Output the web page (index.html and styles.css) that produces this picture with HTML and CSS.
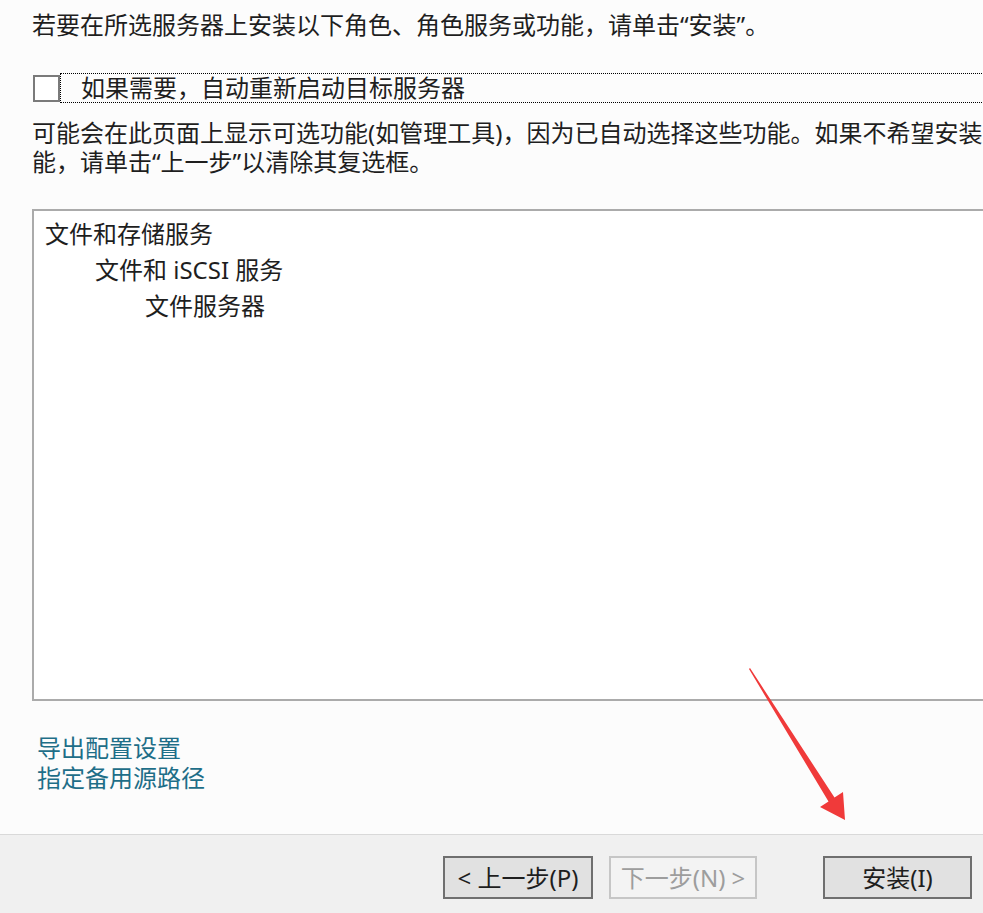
FILE: index.html
```html
<!DOCTYPE html>
<html lang="zh-CN">
<head>
<meta charset="utf-8">
<title>确认安装所选内容</title>
<link rel="stylesheet" href="styles.css">
</head>
<body>
<div class="page">
  <div class="content">
    <p class="intro">若要在所选服务器上安装以下角色、角色服务或功能，请单击“安装”。</p>
    <div class="check-row">
      <span class="checkbox"></span>
      <span class="focus-label">如果需要，自动重新启动目标服务器</span>
    </div>
    <p class="note">可能会在此页面上显示可选功能(如管理工具)，因为已自动选择这些功能。如果不希望安装这些可选功<br>能，请单击“上一步”以清除其复选框。</p>
    <div class="listbox">
      <div class="item lvl0">文件和存储服务</div>
      <div class="item lvl1">文件和 iSCSI 服务</div>
      <div class="item lvl2">文件服务器</div>
    </div>
    <div class="links">
      <a class="link">导出配置设置</a>
      <a class="link">指定备用源路径</a>
    </div>
  </div>
  <div class="footer">
    <button class="btn">&lt; 上一步(P)</button>
    <button class="btn disabled">下一步(N) &gt;</button>
    <button class="btn install">安装(I)</button>
  </div>
  <svg class="arrow" width="120" height="170" viewBox="0 0 120 170">
    <path d="M3 3 L82.5 135.5 L74 141 L99 154 L97 126 L88.5 131.5 L4 2 Z" fill="#f03a3a"/>
  </svg>
</div>
</body>
</html>
```

FILE: styles.css
```css
html, body {
  margin: 0;
  padding: 0;
}
body {
  width: 983px;
  height: 913px;
  overflow: hidden;
  background: #fcfcfc;
  font-family: "Noto Sans", "Noto Sans CJK SC", sans-serif;
  color: #1e1e1e;
}
.page {
  position: relative;
  width: 983px;
  height: 913px;
  display: flex;
  flex-direction: column;
}
.content {
  flex: 1;
  padding-left: 32px;
  padding-top: 10px;
  box-sizing: border-box;
}
.intro {
  margin: 0;
  font-size: 24px;
  line-height: 30px;
  white-space: nowrap;
}
.check-row {
  margin-top: 33px;
  display: flex;
  align-items: center;
  height: 30px;
  white-space: nowrap;
}
.checkbox {
  width: 23px;
  height: 23px;
  border: 2px solid #7a7a7a;
  background: #fff;
  flex: none;
  margin-left: 1px;
}
.focus-label {
  flex: none;
  width: 1000px;
  height: 30px;
  box-sizing: border-box;
  border: 1px dotted #000;
  padding-left: 20px;
  font-size: 24px;
  line-height: 28px;
}
.note {
  margin: 15px 0 0;
  font-size: 24px;
  line-height: 29px;
  white-space: nowrap;
}
.listbox {
  margin-top: 33px;
  width: 1000px;
  height: 492px;
  box-sizing: border-box;
  border: 2px solid #ababab;
  background: #fff;
  padding-top: 5px;
  padding-left: 11px;
}
.item {
  font-size: 24px;
  line-height: 36px;
  white-space: nowrap;
}
.lvl1 { padding-left: 50px; }
.lvl2 { padding-left: 100px; }
.links {
  margin-top: 32px;
  padding-left: 5px;
  display: flex;
  flex-direction: column;
}
.link {
  font-size: 24px;
  line-height: 30px;
  color: #1e6e88;
}
.footer {
  flex: none;
  height: 79px;
  box-sizing: border-box;
  border-top: 1px solid #d9d9d9;
  background: #f0f0f0;
  display: flex;
  align-items: flex-start;
  padding-top: 21px;
  padding-left: 443px;
}
.btn {
  height: 43px;
  box-sizing: border-box;
  border: 2px solid #6f6f6f;
  background: #e1e1e1;
  font-family: "Noto Sans", "Noto Sans CJK SC", sans-serif;
  font-size: 24px;
  line-height: 36px;
  color: #1e1e1e;
  padding: 0;
  width: 150px;
}
.btn.disabled {
  margin-left: 16px;
  width: 148px;
  border-color: #c6c6c6;
  background: #f3f3f3;
  color: #9d9d9d;
}
.btn.install {
  margin-left: 66px;
  width: 149px;
}
.arrow {
  position: absolute;
  left: 746px;
  top: 666px;
}
```
